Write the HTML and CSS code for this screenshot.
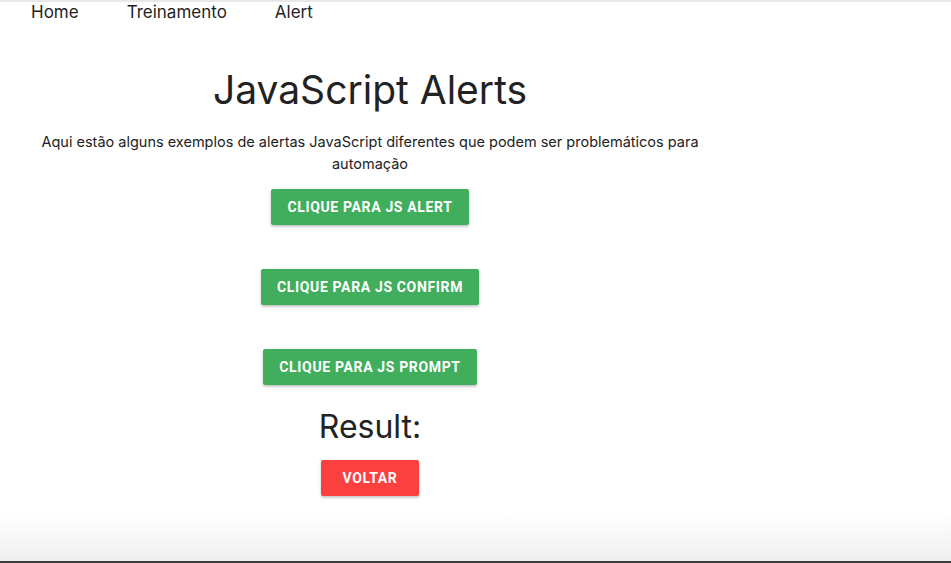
FILE: index.html
```html
<!DOCTYPE html>
<html lang="pt">
<head>
<meta charset="utf-8">
<title>JavaScript Alerts</title>
<link rel="stylesheet" href="styles.css">
</head>
<body>
<nav class="nav">
  <a class="nav-link" href="#">Home</a>
  <a class="nav-link" href="#">Treinamento</a>
  <a class="nav-link" href="#">Alert</a>
</nav>
<main class="content">
  <h1 class="title">JavaScript Alerts</h1>
  <p class="intro">Aqui estão alguns exemplos de alertas JavaScript diferentes que podem ser problemáticos para automação</p>
  <div class="actions">
    <button class="btn btn-green">Clique para JS Alert</button>
    <button class="btn btn-green">Clique para JS Confirm</button>
    <button class="btn btn-green">Clique para JS Prompt</button>
  </div>
  <h2 class="result">Result:</h2>
  <button class="btn btn-red">Voltar</button>
</main>
<div class="bottom-shade"></div>
</body>
</html>
```
FILE: styles.css
```css
html, body {
  margin: 0;
  padding: 0;
  background: #ffffff;
  height: 100%;
  overflow: hidden;
}
body {
  font-family: Inter, "Noto Sans", "Liberation Sans", sans-serif;
  color: #222222;
  border-top: 2px solid #e8e8e8;
  box-sizing: border-box;
}
.nav {
  display: flex;
  padding: 0 7px;
  height: 20px;
  align-items: center;
}
.nav-link {
  padding: 0 24px;
  font-size: 17px;
  color: #1f1f1f;
  text-decoration: none;
}
.content {
  width: 740px;
  display: flex;
  flex-direction: column;
  align-items: center;
  text-align: center;
}
.title {
  margin: 44px 0 0;
  font-size: 39px;
  line-height: 48px;
  font-weight: 400;
  color: #222222;
}
.intro {
  margin: 17px 0 0;
  padding: 0 20px;
  font-size: 14.5px;
  line-height: 22px;
  color: #222222;
}
.actions {
  margin-top: 14px;
  display: flex;
  flex-direction: column;
  align-items: center;
  gap: 44px;
}
.btn {
  border: none;
  border-radius: 2px;
  height: 36px;
  padding: 0 16px;
  font-family: Roboto, "Liberation Sans", sans-serif;
  font-size: 14px;
  font-weight: 700;
  letter-spacing: 0.65px;
  text-transform: uppercase;
  color: #ffffff;
  box-shadow: 0 2px 2px rgba(0,0,0,0.14), 0 1px 4px rgba(0,0,0,0.12);
}
.btn-green {
  background: #41ae5d;
}
.btn-red {
  background: #fc3f3f;
  padding: 0 22px;
}
.result {
  margin: 22px 0 13px;
  font-size: 32px;
  line-height: 40px;
  font-weight: 400;
  color: #222222;
}
.bottom-shade {
  position: fixed;
  left: 0;
  right: 0;
  bottom: 0;
  height: 46px;
  background: linear-gradient(to bottom, rgba(236,236,236,0), rgba(236,236,236,0.85));
  border-bottom: 2px solid #3a3a3a;
  pointer-events: none;
}
```
